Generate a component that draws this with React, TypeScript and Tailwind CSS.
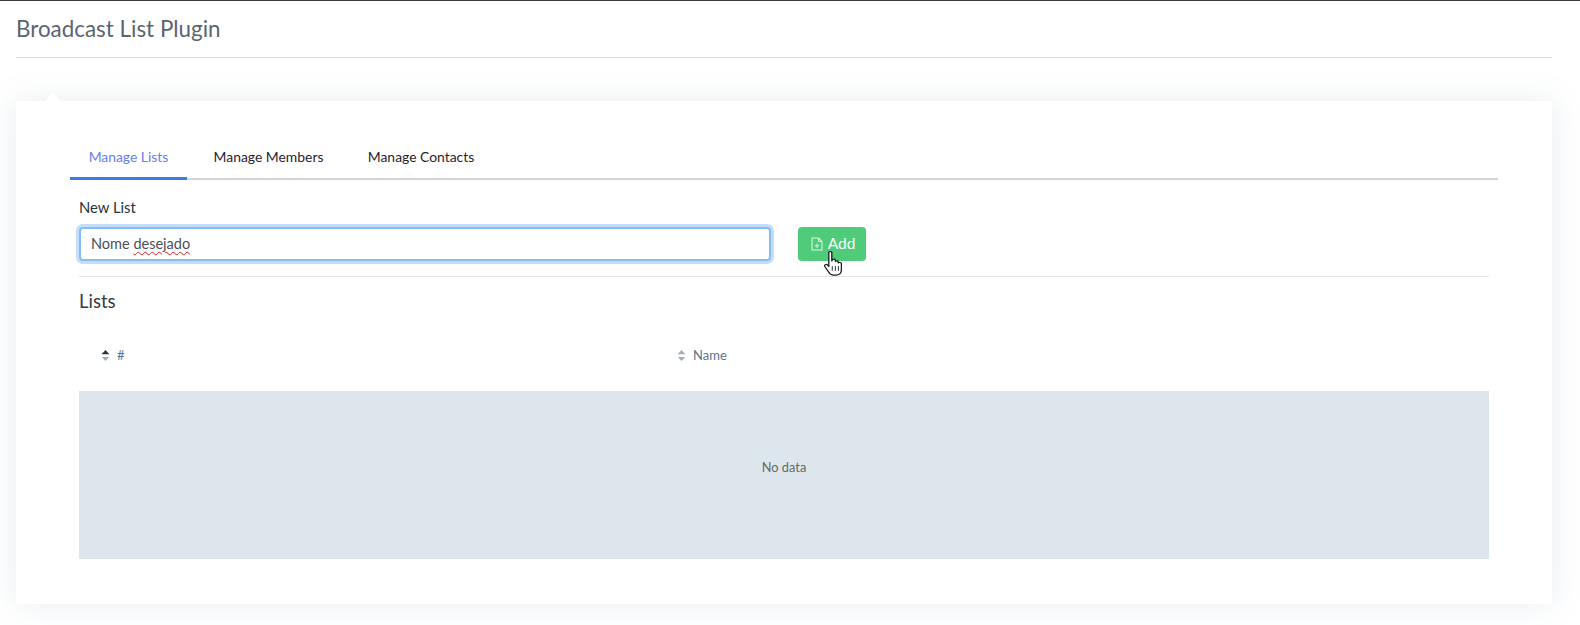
import React from 'react';

const font = { fontFamily: 'Lato, "Noto Sans", sans-serif' };

function SortIcon({ active }: { active?: boolean }) {
  return (
    <svg width="9" height="13" viewBox="0 0 9 13" className="shrink-0">
      <path d="M4.5 1 L8.5 5.2 H0.5 Z" fill={active ? '#2b3445' : '#a3afb8'} />
      <path d="M0.8 8 H8.2 L4.5 12 Z" fill="#a3afb8" />
    </svg>
  );
}

function FilePlusIcon() {
  return (
    <svg width="12" height="14" viewBox="0 0 12 14" fill="none" stroke="#d9f5e2" strokeWidth="1.1" className="shrink-0">
      <path d="M1 1 H7.5 L11 4.5 V13 H1 Z" />
      <path d="M7.5 1 V4.5 H11" />
      <path d="M6 6.5 V11 M3.8 8.8 H8.2" />
    </svg>
  );
}

function HandCursor() {
  return (
    <svg width="18" height="25" viewBox="0.5 0.5 15 24" preserveAspectRatio="none" className="absolute left-[26px] top-[24px]">
      <path
        d="M4.5 2 C4.5 0.7 7 0.7 7 2 V10 L7.6 8.8 C8 8 10 8 10 9.6 V10.6 C10.4 9.6 12.4 9.8 12.4 11.2 V12 C13 11 15 11.4 15 13 V18.5 C15 21.5 13.5 23.6 10.5 23.6 H8.5 C6.4 23.6 5.4 22.6 4.3 20.6 L1.2 15.4 C0.3 13.8 2.4 12.6 3.5 14 L4.5 15.4 Z"
        fill="#ffffff"
        stroke="#1c1c1c"
        strokeWidth="1.1"
        strokeLinejoin="round"
      />
      <path d="M7.4 15 V19.5 M10 15 V19.5 M12.5 15 V19.5" stroke="#1c1c1c" strokeWidth="0.8" fill="none" />
    </svg>
  );
}

function Tab({ label, active, width }: { label: string; active?: boolean; width: string }) {
  return (
    <div
      className={`${width} h-[41px] -mb-[2px] pb-[2px] flex items-center justify-center border-b-[3px] text-[13.9px] ${
        active ? 'border-[#3f7be8] text-[#6480ee]' : 'border-transparent text-[#1f2430]'
      }`}
    >
      {label}
    </div>
  );
}

export default function App() {
  return (
    <div className="min-h-[625px] bg-white border-t border-[#3a3a3f] pl-4 pr-7 overflow-hidden" style={font}>
      <div className="h-[57px] border-b border-[#d5dfe6] flex items-start pt-[14px]">
        <h1 className="text-[22.4px] leading-[28px] text-[#5c6470]">Broadcast List Plugin</h1>
      </div>

      <div className="relative mt-[43px] h-[503px] bg-white shadow-[0_0_30px_rgba(120,145,165,0.16)] pt-[38px] px-[54px]">
        <div className="absolute left-[29px] -top-[8px] w-0 h-0 border-x-[8.5px] border-x-transparent border-b-[8px] border-b-white" />

        <div className="flex gap-[9px] h-[41px] border-b-2 border-[#d0d3d9]">
          <Tab label="Manage Lists" active width="w-[117px]" />
          <Tab label="Manage Members" width="w-[145px]" />
          <Tab label="Manage Contacts" width="w-[142px]" />
        </div>

        <div className="px-[9px]">
          <label className="block mt-[17px] text-[14.8px] leading-[20px] text-[#2b2f38]">New List</label>

          <div className="flex items-center mt-[10px]">
            <div className="w-[692px] h-[34px] flex items-center pl-[10px] bg-white rounded-[4px] border-2 border-[#86bdf8] shadow-[0_0_0_3px_#c3ddfb] text-[14.5px] text-[#4a4f58]">
              <span>
                Nome{' '}
                <span className="underline decoration-wavy decoration-[#e02020] decoration-1 underline-offset-2">
                  desejado
                </span>
              </span>
            </div>
            <div className="relative ml-[27px]">
              <button className="w-[68px] h-[34px] flex items-center justify-center gap-[5px] pl-[2px] bg-[#4fcb7a] rounded-[4px] text-[15.5px] text-white">
                <FilePlusIcon />
                Add
              </button>
              <HandCursor />
            </div>
          </div>

          <div className="mt-[15px] border-t border-[#e1e4e8]" />

          <h2 className="mt-[13px] text-[18.5px] leading-[22px] text-[#333a48]">Lists</h2>

          <div className="flex h-[79px] items-center pt-[8px] text-[13px] text-[#5d7390]">
            <div className="w-[577px] pl-[22px] flex items-center gap-[7px]">
              <SortIcon active />
              <span>#</span>
            </div>
            <div className="pl-[21px] flex items-center gap-[7px]">
              <SortIcon />
              <span>Name</span>
            </div>
          </div>

          <div className="h-[168px] bg-[#dee6ed] flex items-center justify-center pb-[14px] text-[12.8px] text-[#5f6b62]">
            No data
          </div>
        </div>
      </div>
    </div>
  );
}
